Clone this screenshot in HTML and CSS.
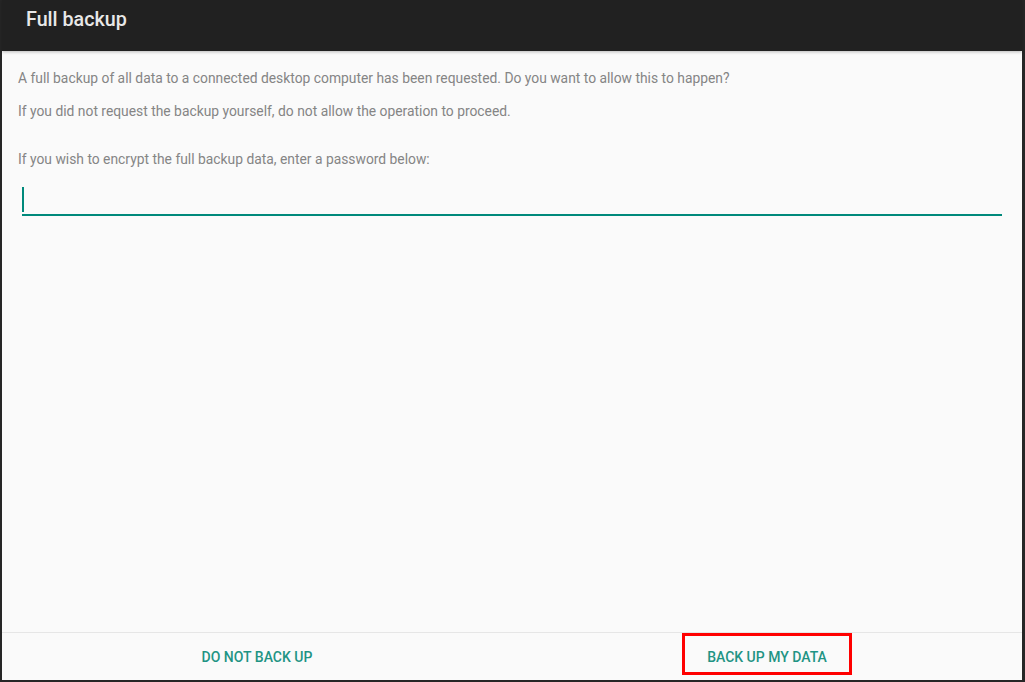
FILE: index.html
```html
<!DOCTYPE html>
<html lang="en">
<head>
<meta charset="utf-8">
<title>Full backup</title>
<link rel="stylesheet" href="styles.css">
</head>
<body>
<div class="screen">
  <header class="appbar">
    <h1 class="title">Full backup</h1>
  </header>
  <main class="content">
    <p class="msg msg-first">A full backup of all data to a connected desktop computer has been requested. Do you want to allow this to happen?</p>
    <p class="msg">If you did not request the backup yourself, do not allow the operation to proceed.</p>
    <p class="msg msg-spaced">If you wish to encrypt the full backup data, enter a password below:</p>
    <div class="field">
      <span class="cursor"></span>
    </div>
  </main>
  <footer class="actions">
    <div class="action-cell">
      <span class="btn">DO NOT BACK UP</span>
    </div>
    <div class="action-cell">
      <span class="btn btn-highlight">BACK UP MY DATA</span>
    </div>
  </footer>
</div>
</body>
</html>
```

FILE: styles.css
```css
html, body {
  margin: 0;
  padding: 0;
  background: #262626;
}

.screen {
  box-sizing: border-box;
  width: 1025px;
  height: 682px;
  padding: 0 3px 2px 2px;
  display: flex;
  flex-direction: column;
  font-family: Roboto, "Liberation Sans", sans-serif;
}

.appbar {
  height: 51px;
  background: #212121;
  box-shadow: 0 1px 3px rgba(0, 0, 0, 0.25);
  position: relative;
  z-index: 1;
  flex: none;
}

.title {
  margin: 0;
  padding: 8px 0 0 24px;
  font-size: 19.7px;
  line-height: 24px;
  font-weight: 500;
  color: #e8e8e8;
}

.content {
  flex: 1;
  background: #fafafa;
  padding: 19px 20px 0 16px;
}

.msg {
  margin: 0;
  font-size: 13.85px;
  line-height: 16px;
  color: #858585;
}

.msg + .msg {
  margin-top: 16.5px;
}

.msg.msg-spaced {
  margin-top: 32.5px;
}

.field {
  margin: 13px 0 0 4px;
  height: 34px;
  border-bottom: 2px solid #00897b;
  display: flex;
  align-items: flex-end;
}

.cursor {
  width: 2px;
  height: 25px;
  background: #00897b;
  margin-bottom: 2px;
}

.actions {
  flex: none;
  height: 48px;
  box-sizing: border-box;
  border-top: 1px solid #e6e6e6;
  background: #fafafa;
  display: flex;
}

.action-cell {
  flex: 1;
  display: flex;
  justify-content: center;
  align-items: flex-start;
}

.btn {
  box-sizing: border-box;
  height: 42px;
  padding: 13px 22px 7px;
  border: 3px solid transparent;
  font-size: 14px;
  line-height: 16px;
  font-weight: 500;
  color: #1f9484;
  white-space: nowrap;
}

.btn-highlight {
  border-color: #ff0000;
}
```
